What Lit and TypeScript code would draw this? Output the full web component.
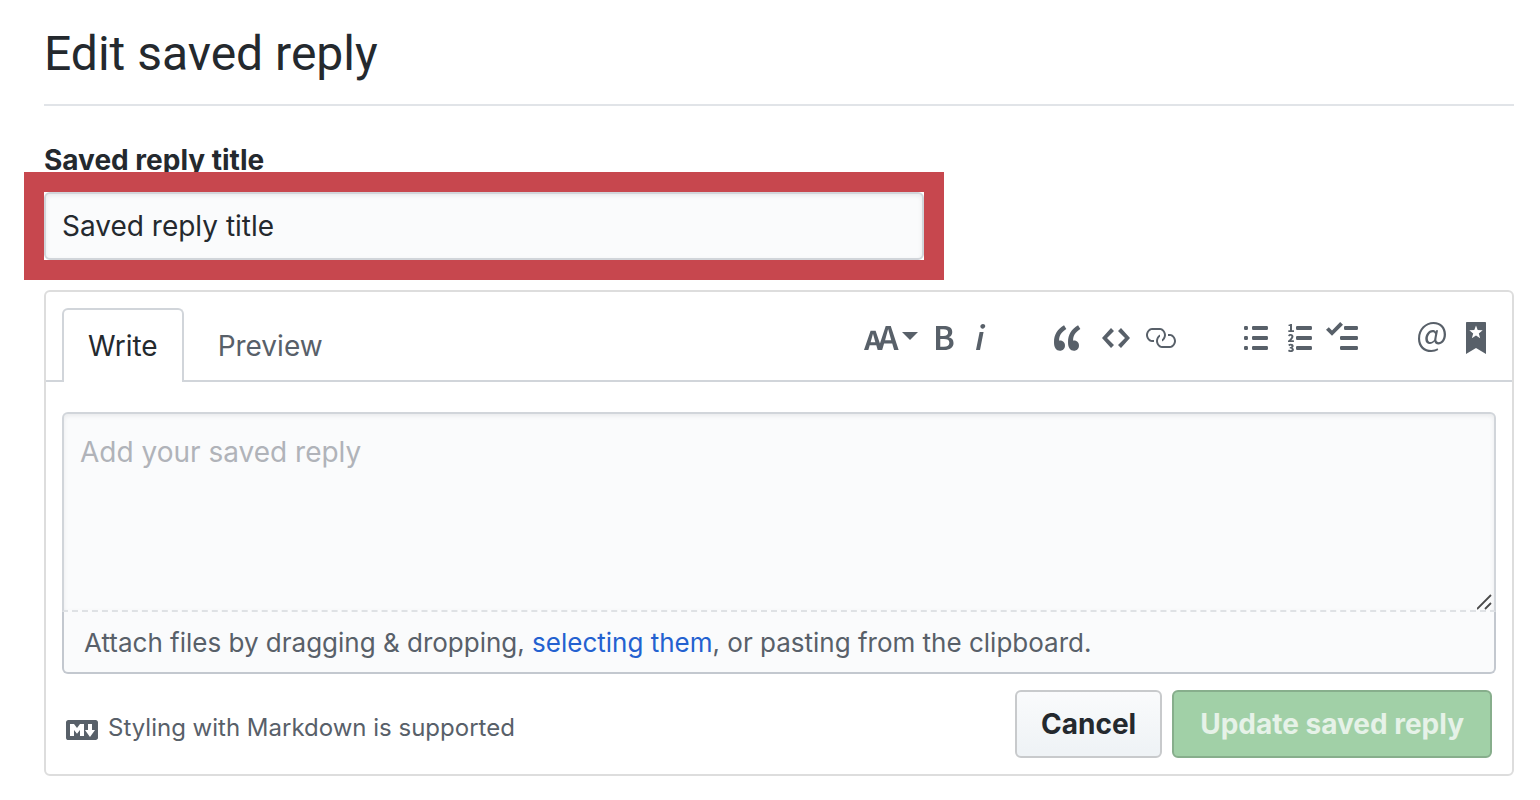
import { LitElement, html, css, svg } from "lit";
import { customElement, state } from "lit/decorators.js";
import { classMap } from "lit/directives/class-map.js";

interface Tool {
  label: string;
  width: number;
  path: string;
  menu?: boolean;
}

const TOOL_GROUPS: Tool[][] = [
  [
    {
      label: "Add header text",
      width: 18,
      menu: true,
      path: "M13.62 9.08L12.1 3.66h-.06l-1.5 5.42h3.08zM5.7 10.13S4.68 6.52 4.53 6.02h-.08l-1.13 4.11H5.7zM17.31 14h-2.25l-.95-3.25h-4.07L9.09 14H6.84l-.69-2.33H2.87L2.17 14H0l3.3-9.59h2.5l2.17 6.34L10.86 2h2.52l3.94 12h-.01z",
    },
    {
      label: "Add bold text",
      width: 10,
      path: "M1 2h3.83c2.48 0 4.3.75 4.3 2.95 0 1.14-.63 2.23-1.67 2.61v.06c1.33.3 2.3 1.23 2.3 2.86 0 2.39-1.97 3.52-4.61 3.52H1V2zm3.66 4.95c1.67 0 2.38-.66 2.38-1.69 0-1.17-.78-1.61-2.34-1.61H3.13v3.3h1.53zm.27 5.39c1.77 0 2.75-.64 2.75-1.98 0-1.27-.95-1.81-2.75-1.81h-1.8v3.8h1.8v-.01z",
    },
    {
      label: "Add italic text",
      width: 6,
      path: "M2.81 5h1.98L3 14H1l1.81-9zm.36-2.7c0-.7.58-1.3 1.33-1.3.56 0 1.13.38 1.13 1.03 0 .75-.59 1.3-1.33 1.3-.58 0-1.13-.38-1.13-1.03z",
    },
  ],
  [
    {
      label: "Insert a quote",
      width: 14,
      path: "M6.16 3.5C3.73 5.06 2.55 6.67 2.55 9.36c.16-.05.3-.05.44-.05 1.27 0 2.5.86 2.5 2.41 0 1.61-1.03 2.61-2.5 2.61-1.9 0-2.99-1.52-2.99-4.25 0-3.8 1.75-6.53 5.02-8.42L6.16 3.5zm7 0c-2.43 1.56-3.61 3.17-3.61 5.86.16-.05.3-.05.44-.05 1.27 0 2.5.86 2.5 2.41 0 1.61-1.03 2.61-2.5 2.61-1.89 0-2.98-1.52-2.98-4.25 0-3.8 1.75-6.53 5.02-8.42l1.14 1.84h-.01z",
    },
    {
      label: "Insert code",
      width: 14,
      path: "M9.5 3L8 4.5 11.5 8 8 11.5 9.5 13 14 8 9.5 3zm-5 0L0 8l4.5 5L6 11.5 2.5 8 6 4.5 4.5 3z",
    },
    {
      label: "Add a link",
      width: 16,
      path: "M4 9h1v1H4c-1.5 0-3-1.69-3-3.5S2.55 3 4 3h4c1.45 0 3 1.69 3 3.5 0 1.41-.91 2.72-2 3.25V8.59c.58-.45 1-1.27 1-2.09C10 5.22 8.98 4 8 4H4c-.98 0-2 1.22-2 2.5S3 9 4 9zm9-3h-1v1h1c1 0 2 1.22 2 2.5S13.98 12 13 12H9c-.98 0-2-1.22-2-2.5 0-.83.42-1.64 1-2.09V6.25c-1.09.53-2 1.84-2 3.25C6 11.31 7.55 13 9 13h4c1.45 0 3-1.69 3-3.5S14.5 6 13 6z",
    },
  ],
  [
    {
      label: "Add a bulleted list",
      width: 12,
      path: "M2 13c0 .59 0 1-.59 1H.59C0 14 0 13.59 0 13c0-.59 0-1 .59-1h.81c.59 0 .59.41.59 1H2zm2.59-9h6.81c.59 0 .59-.41.59-1 0-.59 0-1-.59-1H4.59C4 2 4 2.41 4 3c0 .59 0 1 .59 1zM1.41 7H.59C0 7 0 7.41 0 8c0 .59 0 1 .59 1h.81c.59 0 .59-.41.59-1 0-.59 0-1-.59-1h.01zm0-5H.59C0 2 0 2.41 0 3c0 .59 0 1 .59 1h.81c.59 0 .59-.41.59-1 0-.59 0-1-.59-1h.01zm10 5H4.59C4 7 4 7.41 4 8c0 .59 0 1 .59 1h6.81c.59 0 .59-.41.59-1 0-.59 0-1-.59-1h.01zm0 5H4.59C4 12 4 12.41 4 13c0 .59 0 1 .59 1h6.81c.59 0 .59-.41.59-1 0-.59 0-1-.59-1h.01z",
    },
    {
      label: "Add a numbered list",
      width: 12,
      path: "M12 13c0 .59 0 1-.59 1H4.59C4 14 4 13.59 4 13c0-.59 0-1 .59-1h6.81c.59 0 .59.41.59 1H12zM4.59 4h6.81c.59 0 .59-.41.59-1 0-.59 0-1-.59-1H4.59C4 2 4 2.41 4 3c0 .59 0 1 .59 1zm6.81 3H4.59C4 7 4 7.41 4 8c0 .59 0 1 .59 1h6.81c.59 0 .59-.41.59-1 0-.59 0-1-.59-1zM2 1h-.72c-.3.19-.58.25-1.03.34V2H1v2.14H.16V5H3v-.86H2V1zm.25 8.13c-.17 0-.45.03-.66.06.53-.56 1.14-1.25 1.14-1.89C2.72 6.52 2.17 6 1.38 6c-.59 0-.97.2-1.38.64l.58.58c.19-.19.38-.38.64-.38.28 0 .48.16.48.52 0 .53-.77 1.2-1.7 2.06V10h3l-.09-.88h-.66v.01zm-.08 3.78v-.03c.44-.19.64-.47.64-.86 0-.7-.56-1.11-1.44-1.11-.48 0-.89.19-1.28.52l.55.64c.25-.2.44-.31.69-.31.27 0 .42.13.42.36 0 .27-.2.44-.86.44v.75c.83 0 .98.17.98.47 0 .25-.23.38-.58.38-.28 0-.56-.14-.81-.38l-.48.66c.3.36.77.56 1.41.56.83 0 1.53-.41 1.53-1.16 0-.5-.31-.81-.77-.94v.01z",
    },
    {
      label: "Add a task list",
      width: 16,
      path: "M15.41 9H7.59C7 9 7 8.59 7 8c0-.59 0-1 .59-1h7.81c.59 0 .59.41.59 1 0 .59 0 1-.59 1h.01zM9.59 4C9 4 9 3.59 9 3c0-.59 0-1 .59-1h5.81c.59 0 .59.41.59 1 0 .59 0 1-.59 1H9.59zM0 3.91l1.41-1.3L3 4.2 7.09 0 8.5 1.41 3 6.91l-3-3zM7.59 12h7.81c.59 0 .59.41.59 1 0 .59 0 1-.59 1H7.59C7 14 7 13.59 7 13c0-.59 0-1 .59-1z",
    },
  ],
  [
    {
      label: "Mention a user or team",
      width: 14,
      path: "M6.58 15c1.25 0 2.52-.31 3.56-.94l-.42-.94c-.84.52-1.89.83-3.03.83-3.23 0-5.64-2.08-5.64-5.72 0-4.37 3.23-7.18 6.58-7.18 3.45 0 5.22 2.19 5.22 5.2 0 2.39-1.34 3.86-2.5 3.86-1.05 0-1.36-.73-1.05-2.19l.73-3.75H8.98l-.11.72c-.41-.63-.94-.83-1.56-.83-2.19 0-3.66 2.39-3.66 4.38 0 1.67.94 2.61 2.3 2.61.84 0 1.67-.53 2.3-1.25.11.94.94 1.45 1.98 1.45 1.67 0 3.77-1.67 3.77-5C14 2.61 11.59 0 7.83 0 3.66 0 0 3.33 0 8.33 0 12.71 2.92 15 6.58 15zm-.31-5c-.73 0-1.36-.52-1.36-1.67 0-1.45.94-3.22 2.41-3.22.52 0 .84.2 1.25.83l-.52 3.02c-.63.73-1.25 1.05-1.78 1.05V10z",
    },
    {
      label: "Insert a saved reply",
      width: 10,
      path: "M.5 0h9c.3 0 .5.2.5.5V16l-5-3-5 3V.5C0 .2.2 0 .5 0zM5 1.7l-.85 2.35-2.5.1 1.95 1.55-.68 2.4L5 6.7l2.08 1.4-.68-2.4 1.95-1.55-2.5-.1L5 1.7z",
    },
  ],
];

const MARKDOWN_PATH =
  "M14.85 3H1.15C.52 3 0 3.52 0 4.15v7.69C0 12.48.52 13 1.15 13h13.69c.64 0 1.15-.52 1.15-1.15v-7.7C16 3.52 15.49 3 14.85 3zM9 11H7V8L5.5 9.92 4 8v3H2V5h2l1.5 2L7 5h2v6zm2.99.5L9.5 8H11V5h2v3h1.5l-2.51 3.5z";

const octicon = (width: number, path: string) => html`
  <svg class="icon" width=${width * 2} height="32" viewBox="0 0 ${width} 16" aria-hidden="true">
    ${svg`<path fill-rule="evenodd" d=${path}></path>`}
  </svg>
`;

@customElement("app-root")
export class AppRoot extends LitElement {
  @state() private tab: "write" | "preview" = "write";

  static styles = css`
    :host {
      display: block;
      background: #fff;
      color: #24292e;
      font-family: Inter, "Liberation Sans", sans-serif;
      font-size: 28px;
      line-height: 42px;
    }
    * {
      box-sizing: border-box;
    }
    button,
    input,
    textarea {
      margin: 0;
      font: inherit;
      color: inherit;
    }
    button {
      cursor: pointer;
    }
    .page {
      padding: 18px 26px 24px 44px;
    }
    .title {
      margin: 0 0 33px;
      padding-bottom: 14px;
      border-bottom: 2px solid #e1e4e8;
      font-family: Roboto, Inter, sans-serif;
      font-size: 48px;
      font-weight: 400;
      line-height: 72px;
    }
    .label {
      display: block;
      margin-bottom: 11px;
      font-weight: 700;
    }
    .highlight {
      position: relative;
      max-width: 880px;
      margin-bottom: 30px;
    }
    .highlight::after {
      content: "";
      position: absolute;
      inset: -20px;
      border: 20px solid #c7474e;
      pointer-events: none;
    }
    .field {
      display: block;
      width: 100%;
      padding: 11px 16px;
      border: 2px solid #d1d5da;
      border-radius: 6px;
      outline: none;
      background: #fafbfc;
      box-shadow: inset 0 2px 4px rgba(27, 31, 35, 0.075);
    }
    .panel {
      border: 2px solid #ddd;
      border-radius: 6px;
    }
    .head {
      display: flex;
      justify-content: space-between;
      padding: 16px 16px 0;
      border-bottom: 2px solid #d1d5da;
    }
    .tabs {
      display: flex;
      gap: 8px;
      margin-bottom: -2px;
    }
    .tab {
      padding: 15px 24px;
      border: 2px solid transparent;
      border-bottom: 0;
      border-radius: 6px 6px 0 0;
      background: none;
      color: #586069;
    }
    .tab.selected {
      border-color: #d1d5da;
      background: #fff;
      color: #24292e;
    }
    .toolbar,
    .group {
      display: flex;
      align-items: flex-start;
    }
    .toolbar {
      padding-top: 6px;
    }
    .group + .group {
      margin-left: 48px;
    }
    .group + .group:last-child {
      margin-left: 40px;
    }
    .tool {
      display: flex;
      align-items: center;
      padding: 8px 10px;
      border: 0;
      background: none;
      color: #586069;
    }
    .tool.wide {
      padding-left: 4px;
    }
    .tool.menu {
      padding-right: 6px;
    }
    .icon {
      display: block;
      flex: none;
      fill: currentColor;
    }
    .caret {
      margin: 0 0 4px 2px;
      border: 8px solid transparent;
      border-top-color: currentColor;
      border-bottom: 0;
    }
    .body {
      padding: 30px 16px 16px;
    }
    .editor {
      position: relative;
    }
    .reply {
      display: block;
      width: 100%;
      height: 200px;
      padding: 17px 16px;
      border: 2px solid #d1d5da;
      border-bottom: 2px dashed #dfe2e5;
      border-radius: 6px 6px 0 0;
      outline: none;
      background: #fafbfc;
      box-shadow: inset 0 2px 4px rgba(27, 31, 35, 0.075);
      resize: none;
    }
    .reply::placeholder {
      color: #b0b3b9;
      opacity: 1;
    }
    .grip {
      position: absolute;
      right: 4px;
      bottom: 2px;
      pointer-events: none;
    }
    .attach {
      margin: 0;
      padding: 11px 20px 9px;
      border: 2px solid #c3c8cf;
      border-top: 0;
      border-radius: 0 0 6px 6px;
      background: #fafbfc;
      color: #586069;
      font-size: 26px;
      line-height: 40px;
    }
    .attach a {
      color: #2361d0;
      text-decoration: none;
    }
    .foot {
      display: flex;
      align-items: center;
      justify-content: space-between;
      padding: 16px 4px 0;
    }
    .markdown {
      display: flex;
      align-items: center;
      gap: 10px;
      padding-top: 12px;
      color: #586069;
      font-size: 24px;
      line-height: 32px;
      text-decoration: none;
    }
    .markdown span {
      padding-bottom: 4px;
    }
    .actions {
      display: flex;
      gap: 10px;
    }
    .button {
      padding: 12px 24px;
      border: 2px solid #c8cacc;
      border-radius: 6px;
      background: linear-gradient(180deg, #fafbfc, #eff3f6 90%);
      font-weight: 700;
      line-height: 40px;
    }
    .button.primary {
      padding: 12px 26px;
      border-color: #87ae8c;
      background: #a1d0a7;
      color: #e6f2e8;
      cursor: default;
    }
  `;

  private renderTab(id: "write" | "preview", text: string) {
    return html`<button
      type="button"
      role="tab"
      aria-selected=${this.tab === id ? "true" : "false"}
      class=${classMap({ tab: true, selected: this.tab === id })}
      @click=${() => (this.tab = id)}
    >${text}</button>`;
  }

  private renderTool(tool: Tool) {
    return html`<button
      type="button"
      aria-label=${tool.label}
      class=${classMap({ tool: true, wide: tool.width === 16, menu: !!tool.menu })}
    >${octicon(tool.width, tool.path)}${tool.menu ? html`<span class="caret"></span>` : ""}</button>`;
  }

  render() {
    return html`
      <main class="page">
        <h1 class="title">Edit saved reply</h1>
        <form @submit=${(e: Event) => e.preventDefault()}>
          <label class="label" for="title">Saved reply title</label>
          <div class="highlight">
            <input class="field" id="title" type="text" value="Saved reply title" />
          </div>
          <section class="panel">
            <div class="head">
              <div class="tabs" role="tablist">
                ${this.renderTab("write", "Write")}${this.renderTab("preview", "Preview")}
              </div>
              <div class="toolbar" role="toolbar" aria-label="Formatting">
                ${TOOL_GROUPS.map(
                  (group) => html`<div class="group">${group.map((tool) => this.renderTool(tool))}</div>`
                )}
              </div>
            </div>
            <div class="body">
              <div class="editor">
                <textarea class="reply" aria-label="Saved reply" placeholder="Add your saved reply"></textarea>
                <svg class="grip" width="15" height="16" viewBox="0 0 15 16" aria-hidden="true">
                  <path d="M0 15L14 1M8 15l6-6" fill="none" stroke="#4a4a4a" stroke-width="1.8" />
                </svg>
              </div>
              <p class="attach">
                Attach files by dragging &amp; dropping, <a href="#">selecting them</a>, or pasting from the clipboard.
              </p>
              <div class="foot">
                <a class="markdown" href="#">${octicon(16, MARKDOWN_PATH)}<span>Styling with Markdown is supported</span></a>
                <div class="actions">
                  <button type="button" class="button">Cancel</button>
                  <button type="submit" class="button primary" disabled>Update saved reply</button>
                </div>
              </div>
            </div>
          </section>
        </form>
      </main>
    `;
  }
}
